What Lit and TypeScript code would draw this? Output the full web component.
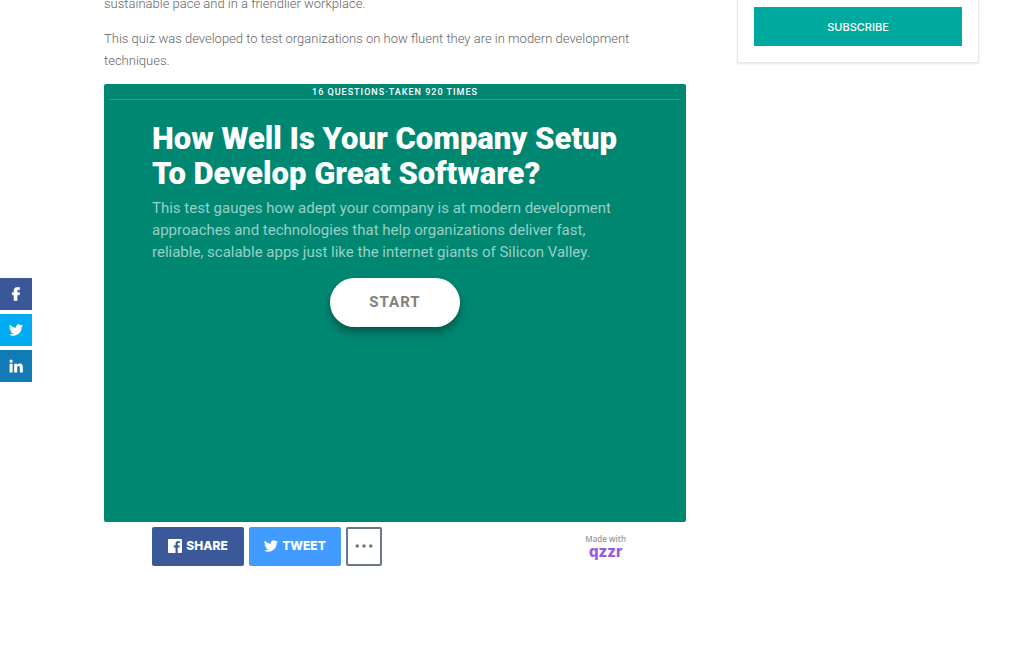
import { LitElement, html, css, svg } from "lit";
import { customElement, property } from "lit/decorators.js";

const BIRD =
  "M24 4.6a10 10 0 0 1-2.8.8 5 5 0 0 0 2.1-2.7 10 10 0 0 1-3.1 1.2 4.9 4.9 0 0 0-8.4 4.5A14 14 0 0 1 1.700 3.200a4.900 4.900 0 0 0 1.500 6.600 4.900 4.900 0 0 1-2.200-.6v.1a4.900 4.900 0 0 0 3.900 4.800 5 5 0 0 1-2.200.1 4.900 4.900 0 0 0 4.600 3.400A9.900 9.900 0 0 1 0 19.500a14 14 0 0 0 21.500-12.400A10 10 0 0 0 24 4.600z";

const glyphs = {
  facebook: svg`<path d="M8.500 23.500V13.500H5.500V9.300h3V6.300C8.500 2.500 10.800.5 14.600.5c1.600 0 3.200.1 3.700.3v3.900h-2c-1.900 0-2.400.9-2.400 2.200v2.400h4.400l-.7 4.200h-3.700v10z" stroke="currentColor" stroke-width="0.800"/>`,
  twitter: svg`<path d=${BIRD} />`,
  linkedin: svg`<path d="M1 8h5.200v15H1zM3.600 1a2.800 2.800 0 1 1 0 5.600 2.800 2.800 0 0 1 0-5.600zM8.800 8h5v2c.8-1.400 2.400-2.500 4.500-2.500 4.400 0 5.500 2.900 5.500 6.700V23h-5.200v-7.700c0-1.800-.1-3.300-2-3.300-2.100 0-2.600 1.500-2.600 3.200V23H8.800z"/>`,
  facebookBox: svg`<path d="M1.300 0h21.400C23.400 0 24 .6 24 1.300v21.400c0 .7-.6 1.300-1.300 1.300h-6.100v-9.300h3.100l.5-3.600h-3.600V8.800c0-1 .3-1.800 1.800-1.800h1.900V3.800a26 26 0 0 0-2.800-.2c-2.700 0-4.600 1.700-4.600 4.700v2.800H9.800v3.600h3.100V24H1.300C.6 24 0 23.400 0 22.700V1.300C0 .6.600 0 1.300 0z"/>`,
  dots: svg`<circle cx="3" cy="12" r="2.400"/><circle cx="12" cy="12" r="2.400"/><circle cx="21" cy="12" r="2.400"/>`,
};

@customElement("app-glyph")
export class AppGlyph extends LitElement {
  @property() name: keyof typeof glyphs = "facebook";

  static styles = css`
    :host {
      display: inline-flex;
      width: 14px;
      height: 14px;
    }
    .glyph {
      width: 100%;
      height: 100%;
      fill: currentColor;
    }
  `;

  render() {
    return html`<svg class="glyph" viewBox="0 0 24 24" aria-hidden="true">${glyphs[this.name]}</svg>`;
  }
}

@customElement("share-rail")
export class ShareRail extends LitElement {
  static styles = css`
    :host {
      position: fixed;
      left: 0;
      top: 278px;
      display: flex;
      flex-direction: column;
      gap: 4px;
    }
    .link {
      display: flex;
      align-items: center;
      justify-content: center;
      width: 32px;
      height: 32px;
      color: #fff;
    }
    .facebook {
      background: #3a579a;
    }
    .twitter {
      background: #00abf0;
    }
    .linkedin {
      background: #127bb6;
    }
  `;

  render() {
    return html`
      <a class="link facebook" href="#" aria-label="Share on Facebook"><app-glyph name="facebook"></app-glyph></a>
      <a class="link twitter" href="#" aria-label="Share on Twitter"><app-glyph name="twitter"></app-glyph></a>
      <a class="link linkedin" href="#" aria-label="Share on LinkedIn"><app-glyph name="linkedin"></app-glyph></a>
    `;
  }
}

@customElement("quiz-card")
export class QuizCard extends LitElement {
  static styles = css`
    :host {
      display: block;
    }
    .panel {
      box-sizing: border-box;
      min-height: 438px;
      padding: 0 5px;
      border-radius: 2px;
      background: #008772;
      color: #fff;
    }
    .stats {
      padding-top: 2px;
      border-bottom: 1px solid #2b9c8a;
      font: 500 9px/13px Roboto, sans-serif;
      letter-spacing: 1px;
      text-align: center;
      text-transform: uppercase;
    }
    .intro {
      padding: 21px 43px 0;
    }
    .title {
      margin: 0;
      font: 900 31px/35px Roboto, sans-serif;
    }
    .summary {
      margin: 6px 0 15px;
      color: #99cfc7;
      font: 400 15px/22px Roboto, sans-serif;
    }
    .start {
      display: block;
      width: 130px;
      height: 49px;
      padding: 0 0 2px;
      margin: 0 auto;
      border: 0;
      border-radius: 25px;
      background: #fff;
      box-shadow: 0 5px 8px rgba(0, 0, 0, 0.35);
      color: #808080;
      font: 700 15px/18px Roboto, sans-serif;
      letter-spacing: 1px;
    }
    .footer {
      display: flex;
      align-items: center;
      gap: 5px;
      padding: 5px 60px 0 48px;
    }
    .share {
      box-sizing: border-box;
      display: flex;
      align-items: center;
      justify-content: center;
      gap: 4px;
      width: 92px;
      height: 39px;
      padding: 0 0 2px;
      border: 0;
      border-radius: 2px;
      color: #fff;
      font: 800 12px/16px Inter, sans-serif;
    }
    .facebook {
      background: #3b5998;
    }
    .twitter {
      background: #429bff;
    }
    .more {
      width: 36px;
      border: 2px solid #6b7785;
      background: #fff;
      color: #6b7785;
    }
    .wide {
      width: 18px;
      height: 18px;
    }
    .credit {
      display: flex;
      flex-direction: column;
      align-items: center;
      margin-left: auto;
      color: #999;
      font: 600 8px/10px "Open Sans", sans-serif;
      text-decoration: none;
    }
    .brand {
      color: #9b5bd6;
      font: 800 15px/16px Inter, sans-serif;
    }
  `;

  render() {
    return html`
      <section class="panel">
        <div class="stats">16 questions·taken 920 times</div>
        <div class="intro">
          <h2 class="title">How Well Is Your Company Setup To Develop Great Software?</h2>
          <p class="summary">
            This test gauges how adept your company is at modern development approaches and technologies that help
            organizations deliver fast, reliable, scalable apps just like the internet giants of Silicon Valley.
          </p>
          <button class="start" type="button">START</button>
        </div>
      </section>
      <div class="footer">
        <button class="share facebook" type="button"><app-glyph name="facebookBox"></app-glyph>SHARE</button>
        <button class="share twitter" type="button"><app-glyph name="twitter"></app-glyph>TWEET</button>
        <button class="share more" type="button" aria-label="More sharing options">
          <app-glyph class="wide" name="dots"></app-glyph>
        </button>
        <a class="credit" href="#">Made with<span class="brand">qzzr</span></a>
      </div>
    `;
  }
}

@customElement("app-root")
export class AppRoot extends LitElement {
  static styles = css`
    :host {
      display: block;
      min-height: 100vh;
      overflow: hidden;
      background: #fff;
    }
    .page {
      display: grid;
      grid-template-columns: minmax(0, 1fr) 242px;
      align-items: start;
      gap: 51px;
      padding: 0 45px 0 104px;
    }
    .article {
      margin-top: -7px;
      color: #666;
      font: 300 13px/22px Roboto, sans-serif;
    }
    .text {
      margin: 0 0 12px;
    }
    .text:first-child {
      margin-bottom: 13px;
    }
    .signup {
      box-sizing: border-box;
      padding: 7px 16px 16px;
      border: 1px solid #e8e8e8;
      border-top: 0;
      box-shadow: 0 1px 2px rgba(0, 0, 0, 0.1);
    }
    .subscribe {
      display: block;
      width: 100%;
      height: 39px;
      padding: 0;
      border: 0;
      background: #00a99d;
      color: #fff;
      font: 500 11px/16px Inter, sans-serif;
    }
  `;

  render() {
    return html`
      <share-rail></share-rail>
      <div class="page">
        <main class="article">
          <p class="text">sustainable pace and in a friendlier workplace.</p>
          <p class="text">
            This quiz was developed to test organizations on how fluent they are in modern development techniques.
          </p>
          <quiz-card></quiz-card>
        </main>
        <aside class="signup">
          <button class="subscribe" type="button">SUBSCRIBE</button>
        </aside>
      </div>
    `;
  }
}
